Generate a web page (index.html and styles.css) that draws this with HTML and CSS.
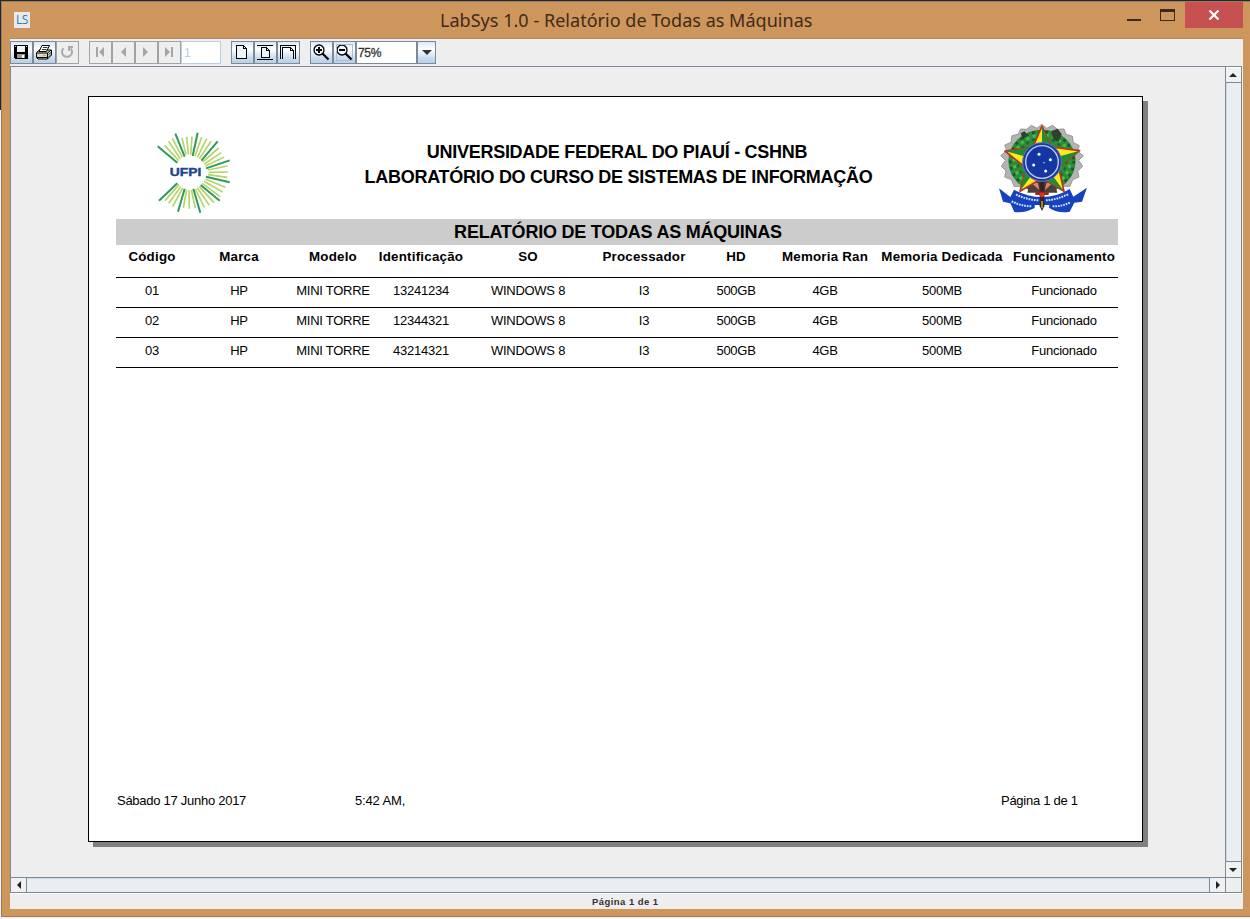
FILE: index.html
```html
<!DOCTYPE html>
<html lang="pt-BR">
<head>
<meta charset="utf-8">
<title>LabSys 1.0 - Relatório de Todas as Máquinas</title>
<link rel="stylesheet" href="styles.css">
</head>
<body>
<div class="window">
  <header class="titlebar">
    <span class="app-icon">LS</span>
    <h1 class="title"><span>LabSys 1.0 - Relatório de Todas as Máquinas</span></h1>
    <div class="controls">
      <svg class="min" width="14" height="2"><rect width="14" height="2" fill="#3a2a18"/></svg>
      <svg class="max" width="15" height="12" shape-rendering="crispEdges"><rect x=".5" y=".5" width="14" height="11" fill="none" stroke="#3a2a18"/><rect width="15" height="3" fill="#3a2a18"/></svg>
      <span class="close"><svg width="12" height="10" viewBox="0 0 12 10"><path d="M1.500 .5 10.500 9.500M10.500 .5 1.500 9.500" stroke="#fff" stroke-width="2.200"/></svg></span>
    </div>
  </header>
  <main class="client">
    <div class="toolbar">
      <div class="group">
        <span class="btn"><svg width="21" height="21" shape-rendering="crispEdges"><path d="M3 3H17V17H4L3 16Z" fill="#000"/><path d="M6 4H14V10H6Z" fill="#f4f4f4"/><path d="M6 12H14V16H6Z" fill="#999"/><path d="M11 13H13V16H11Z" fill="#fff"/><path d="M4 4H5V5H4ZM15 4H16V5H15Z" fill="#ccc"/></svg></span>
        <span class="btn"><svg width="21" height="21"><path d="M2.500 10.500 5.500 8H15L17.500 8V13L13.500 17H4L2.500 15.500Z" fill="#d8d8c8" stroke="#000"/><path d="M5 9.500 8 3.500H15.500L12.500 9.500Z" fill="#fff" stroke="#000"/><path d="M9 5.500H13.500M8 7.500H12.500" stroke="#000" stroke-width=".8"/><path d="M3 11H13.500L17 8M3 15.500H13.500M13.500 11V17" stroke="#000" fill="none"/><path d="M14.500 12.500 17 10.500M14.500 15 17 12.500" stroke="#333"/><path d="M9 13.500H12" stroke="#bb3"/></svg></span>
        <span class="btn off"><svg width="21" height="21"><path d="M6.600 6.200A5 5 0 1 0 13.600 6.400" fill="none" stroke="#aaa" stroke-width="2"/><path d="M11 4H16V6H13V9H11Z" fill="#aaa"/></svg></span>
      </div>
      <div class="group nav">
        <span class="btn off"><svg width="21" height="21"><path d="M6 5H8V15H6ZM14 5V15L9 10Z" fill="#a5a5a5"/></svg></span>
        <span class="btn off"><svg width="21" height="21"><path d="M13 5V15L8 10Z" fill="#a5a5a5"/></svg></span>
        <span class="btn off"><svg width="21" height="21"><path d="M7 5V15L12 10Z" fill="#a5a5a5"/></svg></span>
        <span class="btn off"><svg width="21" height="21"><path d="M6 5V15L11 10ZM12 5H14V15H12Z" fill="#a5a5a5"/></svg></span>
        <span class="page-field">1</span>
      </div>
      <div class="group fit">
        <span class="btn"><svg width="21" height="21" shape-rendering="crispEdges"><path d="M4.500 3.500H11.500L14.500 6.500V16.500H4.500ZM11.500 3.500V6.500H14.500" fill="#edf4fb" stroke="#000"/></svg></span>
        <span class="btn"><svg width="21" height="21" shape-rendering="crispEdges"><path d="M2 3.500H18M2 17.500H18" stroke="#000"/><path d="M6.500 5.500H11.500L14.500 8.500V15.500H6.500ZM11.500 5.500V8.500H14.500" fill="#edf4fb" stroke="#000"/></svg></span>
        <span class="btn"><svg width="21" height="21" shape-rendering="crispEdges"><path d="M2.500 17V3.500H17.500V17" fill="none" stroke="#000"/><path d="M4.500 17V5.500H12.500L15.500 8.500V17M12.500 5.500V8.500H15.500" fill="none" stroke="#000"/></svg></span>
      </div>
      <div class="group zoom">
        <span class="btn"><svg width="21" height="21"><circle cx="8" cy="8" r="5" fill="#f4f8fc" stroke="#000" stroke-width="1.300"/><path d="M5 8H11M8 5V11" stroke="#000" stroke-width="2"/><path d="M11.500 11.500 17.500 17.500" stroke="#000" stroke-width="2.200"/></svg></span>
        <span class="btn focus"><svg width="21" height="21"><circle cx="8" cy="8" r="5" fill="#f4f8fc" stroke="#000" stroke-width="1.300"/><path d="M5 8H11" stroke="#000" stroke-width="2"/><path d="M11.500 11.500 17.500 17.500" stroke="#000" stroke-width="2.200"/></svg></span>
        <span class="zoom-field"><span>75%</span></span>
        <span class="btn drop"><svg width="10" height="5"><path d="M0 0H10L5 5Z" fill="#333"/></svg></span>
      </div>
    </div>
    <div class="scrollpane">
      <div class="viewport">
        <article class="paper">
          <div class="heading">
            <svg class="ufpi" width="110" height="105" viewBox="0 0 330 315">
              <g stroke="#b5d56a" stroke-width="5">
                <path d="M74 76 116 122M86 64 121 117M97 55 127 112M126 54 138 104M140 50 145 103M156 50 152 104M185 52 165 108M200 56 172 112M213 64 178 116M236 84 188 126M244 98 193 132M252 112 196 138M262 138 204 150M264 156 206 157M262 172 204 164M256 202 196 177M248 216 192 184M240 230 187 190M222 248 178 200M208 256 172 204M193 262 166 207M166 264 154 210M148 266 147 211M130 264 140 210M98 260 128 204M86 250 122 200M75 242 117 194"/>
              </g>
              <g stroke="#2d9a5b" stroke-width="6">
                <path d="M53 79 112 128M106 41 134 110M173 38 158 108M233 64 184 122M269 121 198 145M269 187 198 170M239 242 182 195M181 278 160 206M114 275 134 206M57 242 112 190"/>
              </g>
              <text x="89" y="168" textLength="95" lengthAdjust="spacingAndGlyphs" class="ufpi-text">UFPI</text>
            </svg>
            <div class="org"><p class="org-one">UNIVERSIDADE FEDERAL DO PIAUÍ - CSHNB</p><p class="org-two">LABORATÓRIO DO CURSO DE SISTEMAS DE INFORMAÇÃO</p></div>
            <svg class="arms" width="110" height="105" viewBox="0 0 330 315">
              <path d="M155 28 170 40 188 31 202 43 222 42 228 58 248 64 249 82 268 92 262 108 280 122 266 136 278 154 263 168 267 186 248 194 240 214 72 214 64 194 44 186 48 168 34 154 46 136 32 122 50 106 44 90 63 82 66 62 84 58 92 42 110 43 124 31 141 40Z" fill="#b3b3b3" stroke="#999" stroke-width="3"/>
              <ellipse cx="156" cy="138" rx="101" ry="94" fill="#2c8c3a"/>
              <g fill="none" stroke-dasharray="9 11">
                <ellipse cx="156" cy="138" rx="95" ry="88" stroke="#17592a" stroke-width="8"/>
                <ellipse cx="156" cy="138" rx="84" ry="78" stroke="#4fb850" stroke-width="9" stroke-dashoffset="8"/>
                <ellipse cx="156" cy="138" rx="73" ry="68" stroke="#17692a" stroke-width="7"/>
              </g>
              <path d="M184 48 203 41 215 58 206 80 190 74ZM92 55 104 49 112 60 99 74Z" fill="#30402f"/>
              <path d="M120 196 155 176 193 197 202 233H112Z" fill="#4b403b"/>
              <path d="M122 202 149 226 143 204ZM190 202 164 226 170 204Z" fill="#e88565"/>
              <path d="M156 33 183 96 269 107 206 158 222 229 156 190 90 229 107 158 45 108 129 96Z" fill="#ffe91b" stroke="#bd321d" stroke-width="5" stroke-linejoin="round"/>
              <path d="M156 35V138L183 96ZM267 108 156 138 206 158ZM221 227 156 138V190ZM92 226 156 138 107 158ZM47 109 156 138 129 96Z" fill="#238a35"/>
              <path d="M27 220 61 246 72 224Q112 246 156 246Q200 246 239 222L250 245 291 218 276 260 253 263 239 290Q204 296 177 278L178 270H134L134 279Q104 295 73 291L61 265 39 260Z" fill="#1642bd"/>
              <path d="M78 239Q113 255 148 256M168 256Q202 254 236 237M65 259Q92 273 125 274M188 274Q215 275 242 262" fill="none" stroke="#dce7ff" stroke-width="6" stroke-dasharray="5 3"/>
              <path d="M149 200H163V274L156 288 149 274Z" fill="#332424"/><path d="M136 235H176" stroke="#982a22" stroke-width="10"/><circle cx="156" cy="240" r="7" fill="#e72b20"/><path d="M156 258V280" stroke="#d2b637" stroke-width="4"/>
              <circle cx="156" cy="141" r="58" fill="#1839a4" stroke="#6073b8" stroke-width="3"/>
              <circle cx="156" cy="141" r="49" fill="none" stroke="#c4cdea" stroke-width="4"/>
              <circle cx="156" cy="141" r="44" fill="#1636a3"/>
              <g fill="#fff"><circle cx="147" cy="118" r="4.500"/><circle cx="181" cy="134" r="4.500"/><circle cx="131" cy="150" r="4.500"/><circle cx="167" cy="168" r="4.500"/><circle cx="162" cy="143" r="2"/></g>
            </svg>
          </div>
          <h2 class="report-title"><span>RELATÓRIO DE TODAS AS MÁQUINAS</span></h2>
          <div class="row head"><span>Código</span><span>Marca</span><span>Modelo</span><span>Identificação</span><span>SO</span><span>Processador</span><span>HD</span><span>Memoria Ran</span><span>Memoria Dedicada</span><span>Funcionamento</span></div>
          <div class="row"><span>01</span><span>HP</span><span>MINI TORRE</span><span>13241234</span><span>WINDOWS 8</span><span>I3</span><span>500GB</span><span>4GB</span><span>500MB</span><span>Funcionado</span></div>
          <div class="row"><span>02</span><span>HP</span><span>MINI TORRE</span><span>12344321</span><span>WINDOWS 8</span><span>I3</span><span>500GB</span><span>4GB</span><span>500MB</span><span>Funcionado</span></div>
          <div class="row"><span>03</span><span>HP</span><span>MINI TORRE</span><span>43214321</span><span>WINDOWS 8</span><span>I3</span><span>500GB</span><span>4GB</span><span>500MB</span><span>Funcionado</span></div>
          <footer class="paper-foot"><span class="date">Sábado 17 Junho 2017</span><span class="time">5:42 AM,</span><span class="pages">Página 1 de 1</span></footer>
        </article>
      </div>
      <div class="vbar"><span class="arrow up"><svg width="8" height="4"><path d="M4 0 8 4H0Z" fill="#222"/></svg></span><span class="track"></span><span class="arrow down"><svg width="8" height="4"><path d="M0 0H8L4 4Z" fill="#222"/></svg></span></div>
      <div class="hbar"><span class="arrow left"><svg width="4" height="8"><path d="M4 0V8L0 4Z" fill="#222"/></svg></span><span class="track"></span><span class="arrow right"><svg width="4" height="8"><path d="M0 0V8L4 4Z" fill="#222"/></svg></span></div>
      <div class="corner"></div>
    </div>
    <div class="status">Página 1 de 1</div>
  </main>
</div>
</body>
</html>
```
FILE: styles.css
```css
* { box-sizing: border-box; }
body {
  margin: 0;
  width: 1250px;
  height: 919px;
  padding: 1px 0 2px 1px;
  overflow: hidden;
  background: linear-gradient(#1d2836 0 110px, #f7f3ef 110px);
  font-family: "Liberation Sans", Arial, sans-serif;
}
svg { display: block; flex: none; }
h1, h2, p { margin: 0; }
.window {
  height: 916px;
  padding: 0 7px 8px 8px;
  background: #cd965d;
  border: 1px solid #9c7b58;
  border-right: 0;
}
.titlebar { display: flex; height: 36px; }
.app-icon {
  width: 16px; height: 16px; margin: 10px 0 0 4px;
  background: #e9eaec; color: #2a7db8;
  font: 12px/16px "Open Sans", sans-serif;
  text-align: center; letter-spacing: -.3px;
}
.title {
  flex: 1; padding-left: 410px;
  font: 18px/37px "Noto Sans", sans-serif;
  color: #3f2b18; white-space: nowrap;
}
.title span { letter-spacing: .03px; }
.controls { display: flex; width: 116px; }
.min { margin: 17px 0 0; }
.max { margin: 7px 0 0 19px; }
.close { display: flex; width: 58px; height: 26px; margin-left: 10px; padding-right: 1px; background: #c75050; align-items: center; justify-content: center; }
.client { height: 871px; width: 1233px; background: #eee; border-top: 1px solid #b08868; }
.toolbar { display: flex; height: 27px; padding-top: 2px; }
.group { display: flex; height: 23px; }
.nav, .fit, .zoom { margin-left: 10px; }
.btn {
  display: flex; width: 23px; height: 23px;
  border: 1px solid #7a8a99;
  background: linear-gradient(#dbe7f3, #fff 35%, #c9dcee 75%, #b8cfe5);
}
.btn.off { background: #eee; border-color: #a2a2a2; }
.btn.focus { outline: 1px solid #a9bfd8; outline-offset: -4px; }
.page-field { width: 40px; border: 1px solid #b8cfe5; background: #fff; color: #b8cfe5; font: 12px/23px "Liberation Sans", sans-serif; padding-left: 2px; }
.zoom-field { width: 61px; border: 1px solid #7a8a99; background: #fff; color: #333; font: 12px/23px "Liberation Sans", sans-serif; padding-left: 1px; letter-spacing: -.3px; -webkit-text-stroke: .3px #333; }
.drop { width: 19px; align-items: center; justify-content: center; }
.scrollpane {
  display: grid; width: 1232px; height: 827px;
  grid-template: 810px 15px / 1214px 16px;
  border: 1px solid #7a8a99;
}
.viewport { padding: 29px 0 0 77px; background: #eee; }
.paper {
  width: 1055px; height: 746px; padding: 0 24px 0 27px;
  display: flex; flex-direction: column;
  background: #fff; border: 1px solid #000;
  box-shadow: 5px 5px 0 #808080;
  color: #000;
}
.heading { display: flex; height: 122px; }
.ufpi { margin: 23px 0 0 24px; }
.ufpi-text { font: bold 30px "Liberation Sans", sans-serif; fill: #20458c; stroke: #20458c; stroke-width: 1px; }
.org { width: 740px; padding-top: 43px; text-align: center; font-weight: bold; font-size: 18px; line-height: 25px; letter-spacing: -.28px; white-space: nowrap; }
.org-one { padding-right: 6px; }
.org-two { padding-right: 3px; }
.arms { margin: 18px 0 0; }
.report-title { width: 1002px; height: 26px; background: #ccc; font-size: 18px; line-height: 26px; letter-spacing: -.23px; text-align: center; padding-left: 2px; white-space: nowrap; }
.row {
  display: grid; width: 1002px; height: 30px;
  grid-template-columns: 72px 102px 86px 90px 124px 108px 76px 102px 132px 112px;
  border-bottom: 1px solid #000;
  font-size: 13px; line-height: 26px; letter-spacing: -.26px; text-align: center; white-space: nowrap;
}
.row.head { height: 33px; font-weight: bold; line-height: 24px; font-size: 13.33px; letter-spacing: .22px; }
.paper-foot { display: flex; margin-top: auto; padding: 0 0 32px 1px; font-size: 13px; line-height: 16px; letter-spacing: -.27px; white-space: nowrap; }
.date { width: 238px; }
.time { width: 646px; letter-spacing: -.15px; }
.vbar { display: flex; flex-direction: column; border-left: 1px solid #7a8a99; }
.arrow { display: flex; flex: none; align-items: center; justify-content: center; background: #f1f1f1; }
.vbar .arrow { height: 16px; width: 15px; padding-right: 1px; border-top: 1px solid #fff; }
.vbar .up { border-bottom: 1px solid #7a8a99; }
.vbar .down { border-top: 1px solid #7a8a99; }
.track { flex: 1; background: #ebeef1; border-left: 1px solid #c8dced; }
.hbar { display: flex; border-top: 1px solid #7a8a99; }
.hbar .arrow { width: 16px; }
.hbar .left { border-right: 1px solid #7a8a99; }
.hbar .right { border-left: 1px solid #7a8a99; }
.hbar .track { border-left: 0; border-top: 1px solid #c8dced; }
.corner { border-left: 1px solid #7a8a99; border-top: 1px solid #7a8a99; background: #eee; }
.status { border-top: 1px solid #fff; padding-left: 582px; font-weight: bold; font-size: 9.5px; line-height: 15px; color: #333; letter-spacing: .45px; }
```
